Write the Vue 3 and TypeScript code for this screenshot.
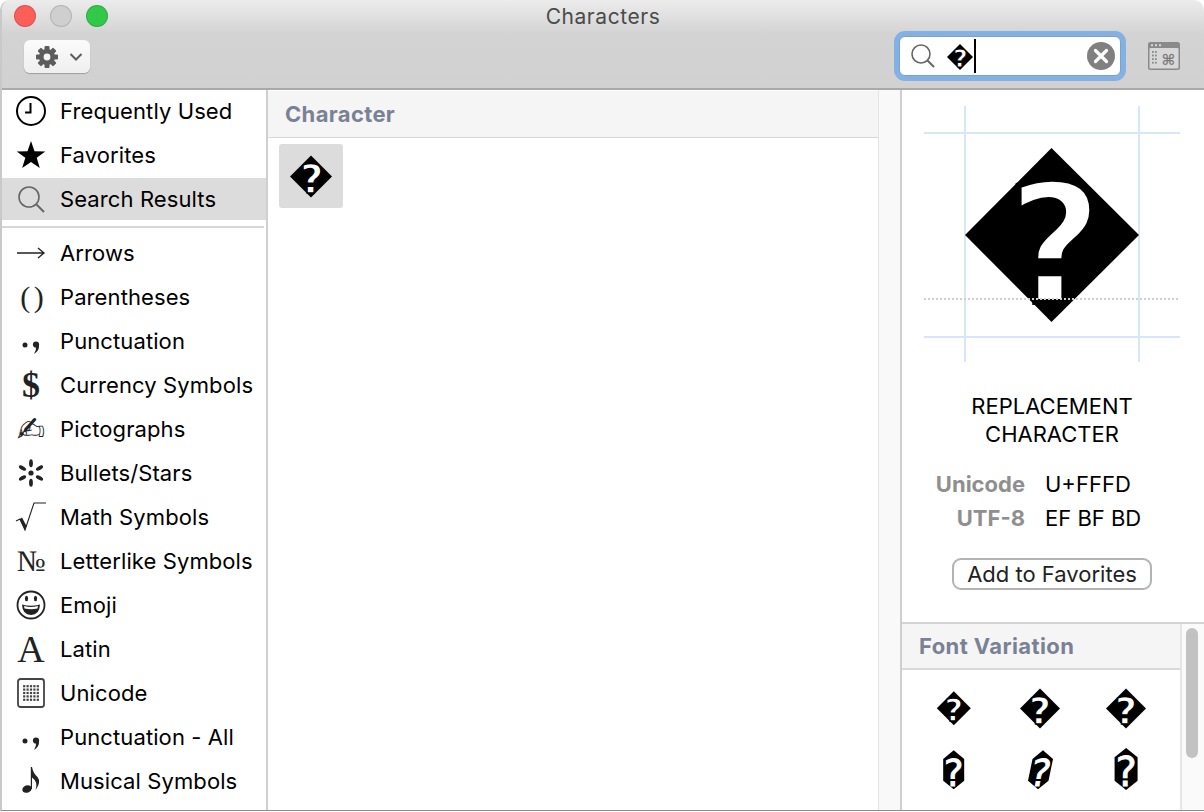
<script setup lang="ts">
interface Category {
  label: string
  icon?: string
  glyph?: string
  glyphClass?: string
}

const topItems: Category[] = [
  { label: 'Frequently Used', icon: 'clock' },
  { label: 'Favorites', icon: 'star' },
  { label: 'Search Results', icon: 'search' },
]

const categories: Category[] = [
  { label: 'Arrows', icon: 'arrow' },
  { label: 'Parentheses', glyph: '( )', glyphClass: 'paren' },
  { label: 'Punctuation', icon: 'punct' },
  { label: 'Currency Symbols', glyph: '$', glyphClass: 'dollar' },
  { label: 'Pictographs', glyph: '✍', glyphClass: 'picto' },
  { label: 'Bullets/Stars', icon: 'bullet' },
  { label: 'Math Symbols', icon: 'root' },
  { label: 'Letterlike Symbols', glyph: '№', glyphClass: 'numero' },
  { label: 'Emoji', icon: 'emoji' },
  { label: 'Latin', glyph: 'A', glyphClass: 'latin' },
  { label: 'Unicode', icon: 'grid' },
  { label: 'Punctuation - All', icon: 'punct' },
  { label: 'Musical Symbols', icon: 'note' },
]

const gridDots: number[][] = []
for (let r = 0; r < 5; r++) {
  for (let c = 0; c < 5; c++) gridDots.push([6.1 + c * 3.4, 7.1 + r * 3.4])
}

const variations = [
  { shape: 'diamond', w: 34, h: 34 },
  { shape: 'diamond', w: 40, h: 40 },
  { shape: 'diamond', w: 40, h: 40 },
  { shape: 'hex', w: 21, h: 39 },
  { shape: 'slant', w: 25, h: 39 },
  { shape: 'hex', w: 23, h: 42 },
]
</script>

<template>
  <div class="window">
    <header class="toolbar">
      <div class="titlebar">
        <div class="lights">
          <span class="light red"></span>
          <span class="light grey"></span>
          <span class="light green"></span>
        </div>
        <div class="title">Characters</div>
      </div>
      <div class="controls">
        <button class="gear-btn">
          <svg width="24" height="24" viewBox="0 0 24 24">
            <g fill="#5c5c5c">
              <circle cx="12" cy="12" r="8" />
              <rect v-for="a in [0, 45, 90, 135]" :key="a" x="9.5" y="1" width="5" height="22" rx="1" :transform="`rotate(${a} 12 12)`" />
            </g>
            <circle cx="12" cy="12" r="3.4" fill="#f4f4f4" />
          </svg>
          <svg width="14" height="10" viewBox="0 0 14 10">
            <path d="M1.5 2 L7 7.5 L12.5 2" fill="none" stroke="#5c5c5c" stroke-width="2" />
          </svg>
        </button>
        <div class="spacer"></div>
        <div class="search">
          <svg width="28" height="28" viewBox="0 0 28 28">
            <circle cx="12" cy="12" r="9" fill="none" stroke="#666" stroke-width="1.6" />
            <path d="M18.5 18.5 L25 25" stroke="#666" stroke-width="2" />
          </svg>
          <svg class="search-glyph" width="26" height="34" viewBox="0 -15 100 130">
            <polygon points="50,0 100,50 50,100 0,50" fill="#000" />
            <text x="51.7" y="88.5" class="qmark" text-anchor="middle">?</text>
          </svg>
          <span class="caret"></span>
          <svg class="clear" width="28" height="28" viewBox="0 0 28 28">
            <circle cx="14" cy="14" r="14" fill="#808080" />
            <path d="M8.5 8.5 L19.5 19.5 M19.5 8.5 L8.5 19.5" stroke="#fff" stroke-width="3.2" stroke-linecap="round" />
          </svg>
        </div>
        <svg class="keyboard" width="32" height="28" viewBox="0 0 32 28">
          <rect x="0" y="0" width="32" height="28" rx="2.5" fill="#8a8a8a" />
          <rect x="1.5" y="6" width="29" height="20.5" rx="1" fill="#d8d8d8" />
          <g fill="#d8d8d8">
            <rect x="3" y="2.2" width="2" height="2" />
            <rect x="7" y="2.2" width="2" height="2" />
            <rect x="11" y="2.2" width="2" height="2" />
          </g>
          <g fill="#8a8a8a">
            <template v-for="r in 4" :key="r">
              <rect v-for="c in 2" :key="c" :x="1 + c * 3" :y="5.4 + r * 3.6" width="1.8" height="1.8" />
            </template>
          </g>
          <text x="20.5" y="22.5" class="cmd" text-anchor="middle">⌘</text>
        </svg>
      </div>
    </header>

    <div class="body">
      <aside class="sidebar">
        <div v-for="item in topItems" :key="item.label" :class="['cat', { selected: item.label === 'Search Results' }]">
          <span class="cat-icon">
            <svg v-if="item.icon === 'clock'" width="32" height="32" viewBox="0 0 32 32">
              <circle cx="16" cy="16" r="14" fill="none" stroke="#000" stroke-width="2" />
              <path d="M15.5 8 V17.5 H10" fill="none" stroke="#000" stroke-width="2" />
            </svg>
            <svg v-else-if="item.icon === 'star'" width="30" height="30" viewBox="0 0 30 30">
              <polygon points="15,1 18.5,11.2 29.3,11.4 20.7,17.8 23.8,28 15,22 6.2,28 9.3,17.8 0.7,11.4 11.5,11.2" fill="#000" />
            </svg>
            <svg v-else width="30" height="30" viewBox="0 0 30 30">
              <circle cx="13" cy="13" r="10" fill="none" stroke="#666" stroke-width="1.6" />
              <path d="M20.5 20.5 L28 28" stroke="#666" stroke-width="2" />
            </svg>
          </span>
          <span class="cat-label">{{ item.label }}</span>
        </div>
        <div class="divider"></div>
        <div v-for="item in categories" :key="item.label" class="cat">
          <span class="cat-icon">
            <span v-if="item.glyph" :class="['glyph', item.glyphClass]">{{ item.glyph }}</span>
            <svg v-else-if="item.icon === 'arrow'" width="30" height="14" viewBox="0 0 30 14">
              <path d="M1 7 H28 M22 2 L28 7 L22 12" fill="none" stroke="#222" stroke-width="1.3" />
            </svg>
            <svg v-else-if="item.icon === 'punct'" width="24" height="30" viewBox="0 0 24 30">
              <circle cx="6" cy="19" r="2.5" fill="#222" />
              <circle cx="17" cy="18.5" r="3.1" fill="#222" />
              <path d="M20 18.5 Q20.5 25 15 28 Q17.5 24 17 21z" fill="#222" />
            </svg>
            <svg v-else-if="item.icon === 'bullet'" width="28" height="28" viewBox="0 0 28 28">
              <g fill="#222">
                <circle cx="14" cy="14" r="2.6" />
                <ellipse v-for="a in [0, 60, 120, 180, 240, 300]" :key="a" cx="14" cy="4.2" rx="1.9" ry="4" :transform="`rotate(${a} 14 14)`" />
              </g>
            </svg>
            <svg v-else-if="item.icon === 'root'" width="32" height="32" viewBox="0 0 32 32">
              <path d="M1 20 L5 18 L10 29 L19 2 H31" fill="none" stroke="#222" stroke-width="1.1" />
              <path d="M4.5 18.5 L10 29 L11.5 25 L7 16.5z" fill="#222" />
            </svg>
            <svg v-else-if="item.icon === 'emoji'" width="30" height="30" viewBox="0 0 30 30">
              <circle cx="15" cy="15" r="13.5" fill="none" stroke="#222" stroke-width="1.8" />
              <ellipse cx="10.5" cy="8.5" rx="1.6" ry="2.8" fill="#222" />
              <ellipse cx="19.5" cy="8.5" rx="1.6" ry="2.8" fill="#222" />
              <path d="M6 14.5 Q15 17 24 14.5 Q23.5 25 15 25 Q6.5 25 6 14.5z" fill="#222" />
              <path d="M8 16 Q15 18 22 16 L21.5 18.5 Q15 20 8.5 18.5z" fill="#fff" />
            </svg>
            <svg v-else-if="item.icon === 'note'" width="22" height="30" viewBox="0 0 22 30">
              <ellipse cx="7" cy="23" rx="4.8" ry="3.6" transform="rotate(-20 7 23)" fill="#222" />
              <path d="M10.8 23 V1 H12 Q13 7 17.5 11 Q21.5 16 15.5 24 Q18.5 16 12 11.5 V23z" fill="#222" />
            </svg>
            <svg v-else width="28" height="30" viewBox="0 0 28 30">
              <rect x="1" y="1" width="26" height="28" rx="2.5" fill="none" stroke="#444" stroke-width="1.8" />
              <rect v-for="(d, i) in gridDots" :key="i" :x="d[0]" :y="d[1]" width="2.2" height="2.2" fill="#444" />
            </svg>
          </span>
          <span class="cat-label">{{ item.label }}</span>
        </div>
      </aside>

      <main class="center">
        <div class="section-head">Character</div>
        <div class="results">
          <div class="tile">
            <svg width="42" height="55" viewBox="0 -15 100 130">
              <polygon points="50,0 100,50 50,100 0,50" fill="#000" />
              <text x="51.7" y="88.5" class="qmark" text-anchor="middle">?</text>
            </svg>
          </div>
        </div>
      </main>

      <div class="gutter"></div>

      <section class="detail">
        <div class="detail-main">
          <svg class="preview" width="278" height="256" viewBox="0 0 278 256">
            <path d="M0 27 H256 M0 231 H256 M41 0 V256 M215 0 V256" stroke="#d8e6fb" stroke-width="2" fill="none" />
            <polygon points="127.5,42 215,129 127.5,216 41,129" fill="#000" />
            <text x="131" y="196" class="qmark big" text-anchor="middle">?</text>
            <path d="M0 193 H254" stroke="#cfcfcf" stroke-width="2" stroke-dasharray="2 2" fill="none" />
          </svg>
          <div class="char-name">REPLACEMENT<br />CHARACTER</div>
          <dl class="meta">
            <dt>Unicode</dt>
            <dd>U+FFFD</dd>
            <dt>UTF-8</dt>
            <dd>EF BF BD</dd>
          </dl>
          <button class="fav-btn">Add to Favorites</button>
        </div>
        <div class="variation-wrap">
          <div class="variation">
            <div class="section-head small">Font Variation</div>
            <div class="var-grid">
              <div v-for="(v, i) in variations" :key="i" class="var-cell">
                <svg :width="v.w * 1.4" :height="v.h * 1.48" :viewBox="`${-v.w * 0.5} ${-v.h * 0.6} ${v.w * 3.5} ${v.h * 3.7}`">
                  <polygon v-if="v.shape === 'diamond'" :points="`${v.w * 1.25},0 ${v.w * 2.5},${v.h * 1.25} ${v.w * 1.25},${v.h * 2.5} 0,${v.h * 1.25}`" fill="#000" />
                  <polygon v-else-if="v.shape === 'hex'" :points="`${v.w * 1.25},0 ${v.w * 2.5},${v.h * 0.55} ${v.w * 2.5},${v.h * 1.95} ${v.w * 1.25},${v.h * 2.5} 0,${v.h * 1.95} 0,${v.h * 0.55}`" fill="#000" />
                  <polygon v-else :points="`${v.w * 1.5},0 ${v.w * 2.5},${v.h * 0.55} ${v.w * 2.05},${v.h * 1.95} ${v.w},${v.h * 2.5} 0,${v.h * 1.95} ${v.w * 0.45},${v.h * 0.55}`" fill="#000" />
                  <text
                    :x="v.w * 1.25"
                    :y="v.shape === 'diamond' ? v.h * 2.21 : v.h * 2.28"
                    :style="{ fontSize: (v.shape === 'diamond' ? v.h * 2.37 : v.h * 2.4) + 'px' }"
                    :class="['qmark', { thin: v.shape !== 'diamond', slanted: v.shape === 'slant' }]"
                    text-anchor="middle"
                  >?</text>
                </svg>
              </div>
            </div>
          </div>
          <div class="scrollbar"><span class="thumb"></span></div>
        </div>
      </section>
    </div>
  </div>
</template>

<style scoped>
.window {
  width: 1204px;
  height: 811px;
  box-sizing: border-box;
  border-left: 2px solid #c9c9c9;
  border-bottom: 1px solid #8c8c8c;
  border-radius: 10px 10px 0 0;
  overflow: hidden;
  display: flex;
  flex-direction: column;
  background: #fff;
  font-family: Inter, "Liberation Sans", sans-serif;
  color: #000;
}

.toolbar {
  height: 90px;
  flex: none;
  box-sizing: border-box;
  border-bottom: 2px solid #a9a9a9;
  background: linear-gradient(#ececec 0, #d3d3d3 34px, #d1d1d1 100%);
}

.titlebar {
  display: grid;
  grid-template-columns: 1fr auto 1fr;
  align-items: center;
  height: 32px;
}

.lights {
  display: flex;
  gap: 14px;
  padding-left: 12px;
}

.light {
  width: 22px;
  height: 22px;
  border-radius: 50%;
  box-sizing: border-box;
  border: 1px solid rgba(0, 0, 0, 0.12);
}

.red { background: #fc5f5a; }
.grey { background: #cfcfcf; }
.green { background: #34c84a; }

.title {
  font-size: 21px;
  color: #4b4b4b;
  letter-spacing: 0.55px;
}

.controls {
  display: flex;
  align-items: center;
  padding: 0 24px 0 22px;
  height: 48px;
}

.spacer { flex: 1; }

.gear-btn {
  width: 66px;
  height: 33px;
  align-self: flex-start;
  margin-top: 8px;
  padding: 0 0 0 11px;
  border: none;
  border-radius: 6px;
  background: linear-gradient(#fbfbfb, #efefef);
  box-shadow: 0 1px 1px rgba(0, 0, 0, 0.25);
  display: flex;
  align-items: center;
  gap: 10px;
}

.search {
  width: 222px;
  height: 40px;
  box-sizing: border-box;
  margin-right: 27px;
  padding: 0 5px 0 9px;
  background: #fff;
  border: 1px solid #7aa0cc;
  border-radius: 6px;
  box-shadow: 0 0 0 5px #84b1e4;
  display: flex;
  align-items: center;
}

.search-glyph { margin-left: 10px; margin-top: 2px; }

.caret {
  width: 2px;
  height: 34px;
  background: #000;
  margin-left: 1px;
}

.clear { margin-left: auto; }

.keyboard { flex: none; }

.cmd {
  font-family: "DejaVu Sans", sans-serif;
  font-size: 15px;
  font-weight: 700;
  fill: #7c7c7c;
}

.qmark {
  font-family: "DejaVu Sans", sans-serif;
  font-weight: 700;
  font-size: 95px;
  fill: #fff;
  stroke: #000;
  stroke-width: 3.4px;
}

.qmark.big {
  font-size: 165px;
  stroke-width: 6px;
}

.qmark.thin {
  font-weight: 400;
  stroke: #fff;
  stroke-width: 2px;
}

.slanted { font-style: italic; }

.body {
  flex: 1;
  display: flex;
  min-height: 0;
}

.sidebar {
  width: 266px;
  flex: none;
  box-sizing: border-box;
  border-right: 2px solid #cfcfcf;
  display: flex;
  flex-direction: column;
  gap: 2px;
}

.cat {
  height: 42px;
  flex: none;
  display: flex;
  align-items: center;
  width: 264px;
}

.cat.selected { background: #dcdcdc; }

.cat-icon {
  width: 58px;
  flex: none;
  display: flex;
  justify-content: center;
  align-items: center;
}

.cat-label {
  font-size: 22px;
  letter-spacing: 0.1px;
  white-space: nowrap;
}

.divider {
  height: 2px;
  flex: none;
  width: 262px;
  background: #d6d6d6;
  margin: 4px 0 2px;
}

.glyph {
  color: #222;
  line-height: 1;
  font-family: "Liberation Serif", serif;
}

.paren { font-size: 30px; white-space: pre; letter-spacing: -2px; }
.dollar { font-size: 36px; font-weight: 700; }
.picto { font-family: "DejaVu Sans", sans-serif; font-size: 34px; }
.numero { font-size: 30px; }
.latin { font-size: 38px; }

.center {
  width: 611px;
  flex: none;
  padding-top: 1px;
  box-sizing: border-box;
  border-right: 1px solid #e4e4e4;
}

.section-head {
  height: 47px;
  box-sizing: border-box;
  padding-left: 17px;
  display: flex;
  align-items: center;
  background: #f5f5f5;
  border-bottom: 1px solid #d9d9d9;
  font-weight: 700;
  font-size: 22px;
  letter-spacing: 0.35px;
  color: #7a8194;
}

.results { padding: 6px 11px; }

.tile {
  width: 64px;
  height: 64px;
  border-radius: 3px;
  background: #dcdcdc;
  display: flex;
  align-items: center;
  justify-content: center;
}

.gutter {
  width: 21px;
  flex: none;
  background: #f9f9f9;
  border-right: 2px solid #cfcfcf;
}

.detail {
  flex: 1;
  min-width: 0;
  display: flex;
  flex-direction: column;
}

.detail-main {
  height: 532px;
  flex: none;
  display: flex;
  flex-direction: column;
  align-items: stretch;
}

.preview {
  display: block;
  margin: 16px 0 0 22px;
  flex: none;
}

.char-name {
  margin-top: 30px;
  width: 300px;
  text-align: center;
  font-size: 22px;
  line-height: 28px;
}

.meta {
  display: grid;
  grid-template-columns: 123px 1fr;
  column-gap: 20px;
  margin: 19px 0 0;
  font-size: 22px;
  line-height: 34px;
}

.meta dt {
  text-align: right;
  font-weight: 700;
  color: #8f8f8f;
}

.meta dd { margin: 0; }

.fav-btn {
  align-self: flex-start;
  margin: 23px 0 0 50px;
  width: 200px;
  height: 32px;
  box-sizing: border-box;
  background: #fff;
  border: 2px solid #b3b3b3;
  border-radius: 9px;
  font-family: inherit;
  font-size: 22px;
  line-height: 1;
  color: #222;
  padding: 0;
}

.variation-wrap {
  flex: 1;
  min-height: 0;
  display: flex;
  border-top: 2px solid #d4d4d4;
}

.variation {
  width: 278px;
  flex: none;
}

.section-head.small {
  height: 46px;
  border-bottom: 2px solid #d9d9d9;
  letter-spacing: 0.4px;
}

.var-grid {
  display: grid;
  grid-template-columns: repeat(3, 86px);
  grid-auto-rows: 61px;
  padding: 8px 0 0 9px;
}

.var-cell {
  display: flex;
  align-items: center;
  justify-content: center;
}

.scrollbar {
  flex: 1;
  background: #fafafa;
  border-left: 2px solid #e6e6e6;
  padding: 4px 0 0 4px;
  box-sizing: border-box;
}

.thumb {
  display: block;
  width: 12px;
  height: 130px;
  border-radius: 6px;
  background: #c2c2c2;
}
</style>

<style>
html, body {
  margin: 0;
  background: #fff;
}
</style>
